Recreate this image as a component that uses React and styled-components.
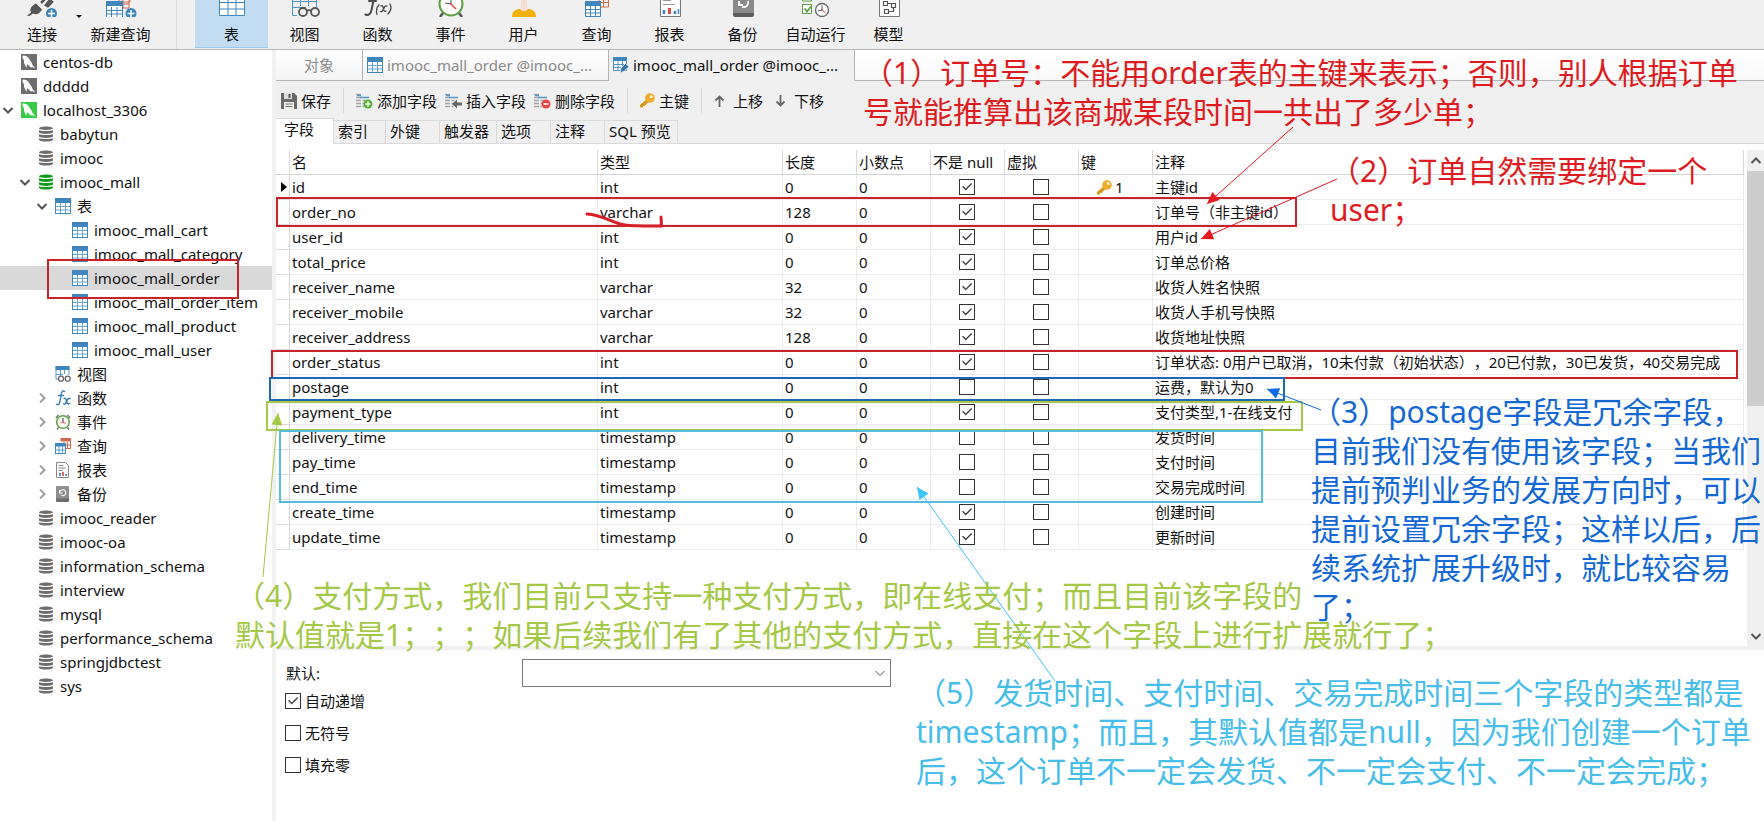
import React from "react";
import styled, { createGlobalStyle, css } from "styled-components";

const GlobalStyle = createGlobalStyle`
  * {
    box-sizing: border-box;
  }
  body {
    margin: 0;
    background: #fff;
    color: #111;
    font-family: "Noto Sans", "Noto Sans CJK SC", sans-serif;
    font-size: 15px;
    line-height: 20px;
    text-spacing-trim: space-all;
  }
  button, input, select {
    margin: 0;
    font: inherit;
    color: inherit;
  }
`;

const AppContainer = styled.div`
  position: relative;
  display: flex;
  flex-direction: column;
  min-height: 100vh;
  overflow: hidden;
`;

/* main toolbar */

const MainBar = styled.header`
  display: flex;
  height: 50px;
  background: #f0f0f0;
  border-bottom: 1px solid #b4b4b4;
  overflow: hidden;
`;
const MainButton = styled.button`
  display: flex;
  flex-direction: column;
  align-items: center;
  width: ${(props) => props.$width || 73}px;
  height: 48px;
  padding: 0 0 0 ${(props) => props.$left || 0}px;
  border: 0;
  border-bottom: 1px solid ${(props) => (props.$active ? "#9ccbee" : "#f0f0f0")};
  background: ${(props) => (props.$active ? "#c2ddf2" : "none")};
  white-space: nowrap;
  svg {
    flex: none;
    margin-bottom: 7px;
  }
`;
const Caret = styled.span`
  align-self: flex-start;
  margin-top: 15px;
  border: 3px solid transparent;
  border-top-color: #111;
`;
const MainDivider = styled.span`
  width: 1px;
  margin: 0 18px 0 17px;
  background: #dcdcdc;
`;

/* layout */

const Body = styled.div`
  display: flex;
  flex: 1;
`;
const Sidebar = styled.nav`
  flex: none;
  width: 276px;
  border-right: 4px solid #f2f2f2;
`;
const Main = styled.main`
  display: flex;
  flex: 1;
  flex-direction: column;
  min-width: 0;
`;

/* tree */

const TreeList = styled.ul`
  margin: 0;
  padding: 0;
  list-style: none;
`;
const TreeRow = styled.li`
  display: flex;
  align-items: center;
  height: 24px;
  padding-left: ${(props) => props.$level * 17}px;
  background: ${(props) => (props.$selected ? "#d9d9d9" : "none")};
  white-space: nowrap;
`;
const Expander = styled.span`
  display: flex;
  justify-content: center;
  width: 16px;
  margin-right: 5px;
`;
const TreeIcon = styled.span`
  display: flex;
  width: 16px;
  margin-right: 6px;
`;

/* document tabs */

const DocTabs = styled.div`
  display: flex;
  height: 31px;
`;
const DocTab = styled.button`
  display: flex;
  align-items: center;
  justify-content: ${(props) => (props.$center ? "center" : "flex-start")};
  gap: 4px;
  width: ${(props) => props.$width}px;
  padding: 0 4px;
  border: 0;
  border-right: 1px solid #b4b4b4;
  border-bottom: 1px solid #b4b4b4;
  background: linear-gradient(#fff, #f4f4f4);
  color: #8a8a8a;
  white-space: nowrap;
  ${(props) =>
    props.$active &&
    css`
      border-bottom-color: #f0f0f0;
      background: #f0f0f0;
      color: #111;
    `}
`;
const DocTabsRest = styled.div`
  flex: 1;
  border-bottom: 1px solid #b4b4b4;
  background: linear-gradient(#fff, #f9f9f9);
`;

/* editor toolbar */

const Tools = styled.div`
  display: flex;
  align-items: center;
  height: 37px;
  padding: 2px 0 0 5px;
  background: #f0f0f0;
`;
const ToolButton = styled.button`
  display: flex;
  align-items: center;
  gap: ${(props) => props.$gap || 4}px;
  padding: 0;
  margin-right: ${(props) => (props.$last ? 12 : 8)}px;
  border: 0;
  background: none;
  white-space: nowrap;
`;
const ToolDivider = styled.span`
  width: 1px;
  height: 25px;
  margin-right: 12px;
  background: #d8d8d8;
`;

const SubTabs = styled.div`
  display: flex;
  align-items: flex-end;
  height: 26px;
  background: #f0f0f0;
  box-shadow: inset 0 -1px #d6d6d6;
`;
const SubTab = styled.button`
  width: ${(props) => props.$width}px;
  height: 24px;
  padding: 0 0 2px 4px;
  border: 1px solid #dadada;
  border-left: 0;
  background: none;
  text-align: left;
  white-space: nowrap;
  ${(props) =>
    props.$active &&
    css`
      height: 26px;
      padding: 0 0 4px 8px;
      border-bottom-color: #fff;
      background: #fff;
    `}
`;

/* fields table */

const GridPane = styled.section`
  display: flex;
  height: 502px;
  padding-top: 6px;
  background: #fff;
`;
const GridScroll = styled.div`
  flex: 1;
  min-width: 0;
  padding-right: 3px;
`;
const Table = styled.table`
  width: 100%;
  table-layout: fixed;
  border-collapse: separate;
  border-spacing: 0;
`;
const Col = styled.col`
  width: ${(props) => (props.$width ? `${props.$width}px` : "auto")};
`;
const Th = styled.th`
  height: 25px;
  padding: 0 0 0 2px;
  border-right: 1px solid #d9d9d9;
  border-bottom: 1px solid #d4d4d4;
  font-weight: 400;
  text-align: left;
  white-space: nowrap;
`;
const Td = styled.td`
  height: 25px;
  padding: 0 0 0 2px;
  border-right: 1px solid #ececec;
  border-bottom: 1px solid #ececec;
  white-space: nowrap;
`;
const MarkCell = styled(Td)`
  padding-left: 5px;
  border-color: #d9d9d9;
  svg {
    display: block;
  }
`;
const CheckCell = styled(Td)`
  padding: 0 0 0 28px;
`;
const KeyMark = styled.span`
  display: flex;
  align-items: center;
  gap: 3px;
  padding-left: 16px;
`;
const Check = styled.input.attrs({ type: "checkbox" })`
  display: block;
  flex: none;
  appearance: none;
  width: 16px;
  height: 16px;
  border: 1px solid #333;
  background: #fff;
  &:checked::after {
    content: "";
    display: block;
    width: 14px;
    height: 14px;
    background: #444;
    clip-path: polygon(15% 48%, 22% 41%, 41% 61%, 80% 21%, 87% 28%, 41% 75%);
  }
`;

const ScrollBar = styled.div`
  display: flex;
  flex-direction: column;
  align-items: center;
  width: 17px;
  background: #f0f0f0;
`;
const ScrollButton = styled.button`
  display: flex;
  align-items: center;
  justify-content: center;
  width: 17px;
  height: 21px;
  padding: 0;
  border: 0;
  background: none;
`;
const ScrollThumb = styled.div`
  width: 17px;
  height: 235px;
  margin-bottom: auto;
  background: #cdcdcd;
`;

/* field properties */

const Splitter = styled.div`
  height: 4px;
  background: #f0f0f0;
`;
const Properties = styled.form`
  display: grid;
  grid-template-columns: 236px 369px;
  align-items: center;
  padding: 9px 0 0 10px;
`;
const SelectBox = styled.div`
  display: grid;
  align-items: center;
  > * {
    grid-area: 1 / 1;
  }
  svg {
    justify-self: end;
    margin-right: 5px;
    pointer-events: none;
  }
`;
const Select = styled.select`
  width: 100%;
  height: 28px;
  padding: 0 24px 0 6px;
  border: 1px solid #7a7a7a;
  border-radius: 0;
  appearance: none;
  background: #fff;
`;
const Options = styled.div`
  display: flex;
  flex-direction: column;
  grid-column: 1 / -1;
  gap: 12px;
  padding-top: 4px;
`;
const Option = styled.label`
  display: flex;
  align-items: center;
  gap: 4px;
  margin-left: -1px;
`;

/* notes over the window */

const Notes = styled.div`
  position: absolute;
  inset: 0;
  overflow: hidden;
  pointer-events: none;
`;
const Arrows = styled.svg`
  position: absolute;
  top: 0;
  left: 0;
`;
const Frame = styled.div`
  position: absolute;
  left: ${(props) => props.$x}px;
  top: ${(props) => props.$y}px;
  width: ${(props) => props.$w}px;
  height: ${(props) => props.$h}px;
  border: 2px solid ${(props) => props.$color};
`;
const Note = styled.p`
  position: absolute;
  left: ${(props) => props.$x}px;
  top: ${(props) => props.$y}px;
  margin: 0;
  color: ${(props) => props.$color};
  font-size: 30px;
  line-height: 39px;
  white-space: pre;
`;

/* icons */

const TableIcon = () => (
  <svg width="16" height="16" viewBox="0 0 16 16">
    <rect x="0.5" y="0.5" width="15" height="15" fill="#fff" stroke="#3f86bd" />
    <rect width="16" height="5" fill="#3f86bd" />
    <path d="M5.5 5v10M10.5 5v10M1 8.5h14M1 12h14" stroke="#6aa5d2" fill="none" />
  </svg>
);

const ViewIcon = () => (
  <svg width="16" height="16" viewBox="0 0 16 16">
    <path d="M1 1h13v8M1 1v12h3M1 8.5h7M5.5 4v6M9.5 4v4" stroke="#5b9bcb" fill="none" />
    <rect x="0.5" width="14" height="4" fill="#3f86bd" />
    <g fill="#fff" stroke="#666" strokeWidth="1.3">
      <circle cx="6" cy="12.7" r="2.5" />
      <circle cx="12.7" cy="12.7" r="2.5" />
    </g>
  </svg>
);

const FxIcon = () => (
  <svg width="16" height="16" viewBox="0 0 16 16" fill="none" stroke="#3b7db5" strokeLinecap="round">
    <path d="M9.5 1.5C7.5 0 6.6 2 6.1 5L4.8 12c-.5 2.6-1.8 3.3-3.3 2.2M3.5 5.5h5" strokeWidth="1.4" />
    <path d="M9 8.5c1.5-1 2 .5 2.5 2.5s1 4 3 2.5M15 8.5c-2-.8-3 2-3.5 3s-1.5 3.5-3 2.5" strokeWidth="1.5" />
  </svg>
);

const ClockIcon = () => (
  <svg width="16" height="16" viewBox="0 0 16 16" fill="none">
    <path d="M1 4l2.5-3M15 4l-2.5-3M3.5 13.5L2 15.5M12.5 13.5l1.5 2" stroke="#777" strokeWidth="1.6" />
    <circle cx="8" cy="8" r="6.3" fill="#fff" stroke="#62a34c" strokeWidth="1.6" />
    <path d="M8 4v4.5" stroke="#333" />
    <path d="M8 8.5l3 .8M8 8.5L5.5 9" stroke="#d55" />
  </svg>
);

const QueryIcon = () => (
  <svg width="16" height="16" viewBox="0 0 16 16">
    <path d="M6 .5h9.5v10H11M9 4v3M12.5 4v6M11 7h5" stroke="#d0694b" fill="none" />
    <rect x="5.5" width="10.5" height="3.5" fill="#d0694b" />
    <rect x="0.5" y="5.5" width="10" height="10" fill="#fff" stroke="#3f86bd" />
    <rect y="5" width="11" height="3.5" fill="#3f86bd" />
    <path d="M4 8v8M7.5 8v8M0 12h11" stroke="#5b9bcb" />
  </svg>
);

const ReportIcon = () => (
  <svg width="16" height="16" viewBox="0 0 16 16">
    <path d="M1.5.5h9l3 3v12h-12z" fill="#fff" stroke="#888" />
    <path d="M3.5 3.5h5M3.5 6h7M3.5 8.5h4" stroke="#888" />
    <path d="M5 11v3M11 12v2" stroke="#3f86bd" strokeWidth="1.8" />
    <path d="M8 10v4" stroke="#d65b4d" strokeWidth="1.8" />
  </svg>
);

const BackupIcon = () => (
  <svg width="16" height="16" viewBox="0 0 16 16">
    <rect x="1" width="13" height="16" rx="1.5" fill="#6b6b6b" />
    <rect x="1" width="13" height="12.5" rx="1.5" fill="#8f8f8f" />
    <path d="M4.5 4v3h3M4.8 6.5a3 3 0 1 1 1.5 2.8" stroke="#fff" strokeWidth="1.1" fill="none" />
  </svg>
);

const ServerIcon = ({ on }) => (
  <svg width="16" height="16" viewBox="0 0 16 16">
    <rect width="16" height="16" fill={on ? "#39cb48" : "#6d6d6d"} />
    <path
      d="M2 1.5C5 1.5 7.5 3 8.5 5.5c1 2 2.5 3 3 5.5l3 3.5-3.5-1.5-1 .5-1.5-1c-.5-1-1-2-2.5-2l-.5 3.500-1.5-3C2.500 9 3.500 7 2.500 5.500 1.500 4 1 2.500 2 1.500z"
      fill="#fff"
    />
  </svg>
);

const DbIcon = ({ on }) => (
  <svg width="16" height="16" viewBox="0 0 16 16">
    <path d="M1 2.5C1-.3 15-.3 15 2.5V13.5C15 16.3 1 16.3 1 13.5z" fill={on ? "#139c1c" : "#6d6d6d"} />
    <path d="M.5 3c2 2 13 2 15 0M.5 7c2 2 13 2 15 0M.5 11c2 2 13 2 15 0" fill="none" stroke="#fff" strokeWidth="1.1" />
  </svg>
);

const chevrons = {
  down: "M1.5 4l4.5 4.5L10.5 4",
  up: "M1.5 8L6 3.5 10.5 8",
  right: "M4 1.5L8.5 6 4 10.5",
};
const Chevron = ({ dir, color = "#555", width = 2 }) => (
  <svg width="12" height="12" viewBox="0 0 12 12" fill="none">
    <path d={chevrons[dir]} stroke={color} strokeWidth={width} />
  </svg>
);

const Plus = ({ cx, cy, r, color }) => (
  <g>
    <circle cx={cx} cy={cy} r={r} fill={color} />
    <path d={`M${cx - r + 2} ${cy}h${2 * r - 4}M${cx} ${cy - r + 2}v${2 * r - 4}`} stroke="#fff" strokeWidth="1.5" />
  </g>
);

// only the lower part of each big icon shows
const BigIcon = ({ children }) => (
  <svg width="32" height="17" viewBox="0 0 32 17" fill="none">
    {children}
  </svg>
);

const ConnectBig = () => (
  <BigIcon>
    <path d="M1 15.5l4-3c-2-4 1-7 5-9l6 6c-2 4-6 6-9 4l-3.5 2.5z" fill="#555" />
    <path d="M15 3l4-4M19 6l5-6 2 2-5 5" stroke="#555" strokeWidth="2.5" />
    <Plus cx={25.5} cy={13.5} r={5.5} color="#3f86bd" />
  </BigIcon>
);
const NewQueryBig = () => (
  <BigIcon>
    <path d="M14 0v2h11V0M18 0v8h6V0M18 4h6" stroke="#d0694b" />
    <path d="M1.5 2.5h16v15h-16zM6.5 7v10M12 7v10M2 10.5h15M2 14h15" fill="#fff" stroke="#3f86bd" />
    <path d="M1 1h17v5H1z" fill="#3f86bd" />
    <Plus cx={26} cy={13.5} r={5.5} color="#3f86bd" />
  </BigIcon>
);
const TableBig = () => (
  <BigIcon>
    <path d="M3.5-2h25v17.5h-25zM12-2v17M20-2v17M3 2.5h25M3 9h25" fill="#fff" stroke="#3f86bd" />
  </BigIcon>
);
const ViewBig = () => (
  <BigIcon>
    <path d="M3.5 0v15.5H8M11.5 0v6M19.5 0v6M27.5 0v7M3 1.5h25M3 7.5h14" stroke="#4f93c7" />
    <g fill="#f0f0f0" stroke="#555" strokeWidth="1.8">
      <circle cx="14" cy="12" r="4" />
      <circle cx="26" cy="12" r="4" />
      <path d="M18 11c1-1 3-1 4 0" />
    </g>
  </BigIcon>
);
const FunctionBig = () => (
  <BigIcon>
    <g stroke="#4a4a4a" strokeLinecap="round">
      <path d="M12-2L9.5 10c-.8 4-3 6-6 4.5M7 1h7" strokeWidth="2" />
      <path d="M17 5c-2.5 2.5-3 6-2 9.5M28 4c1.5 3 1 7-2 10" strokeWidth="1.3" />
      <path d="M19 6c2-1 2 1 2.5 3s1 3 2.5 2M25 6c-2-1-3 2-4 4s-1.5 2-2.5 1.5" strokeWidth="1.3" />
    </g>
  </BigIcon>
);
const ClockBig = () => (
  <BigIcon>
    <path d="M8 13l-3 4M24 13l3 4" stroke="#555" strokeWidth="2.5" />
    <circle cx="16" cy="4" r="11.5" fill="#fff" stroke="#5da044" strokeWidth="2" />
    <path d="M16 4V-3M16 4l-6-1" stroke="#555" />
    <path d="M15 3l6 6" stroke="#e04040" strokeWidth="1.4" />
  </BigIcon>
);
const UserBig = () => (
  <BigIcon>
    <path d="M4 17c0-6 4-8 8-8h8c4 0 8 2 8 8z" fill="#f1b00a" />
    <path d="M12 9c1-1 1-4 1-9h6c0 5 0 8 1 9-2 3-6 3-8 0z" fill="#f5dfd3" />
  </BigIcon>
);
const QueryBig = () => (
  <BigIcon>
    <path d="M18 0v7h9.5V0M22.5 0v7M18 2.5h10" stroke="#d0694b" />
    <path d="M4.5 2.5h15v14h-15zM9.5 6v10M14.5 6v10M5 9.5h14M5 13h14" fill="#fff" stroke="#3f86bd" />
    <path d="M4 1h16v5H4z" fill="#3f86bd" />
  </BigIcon>
);
const ReportBig = () => (
  <BigIcon>
    <path d="M6.5-3h20v19.5h-20z" fill="#fff" stroke="#777" />
    <path d="M9 .5h8M9 4.5h12" stroke="#999" />
    <path d="M10 10v4M21 11v3" stroke="#3f86bd" strokeWidth="2.5" />
    <path d="M15.5 8v6" stroke="#e04a3f" strokeWidth="3" />
    <path d="M24.5 9v5" stroke="#3f86bd" strokeWidth="1.5" />
  </BigIcon>
);
const BackupBig = () => (
  <BigIcon>
    <path d="M6-2h21v17a2 2 0 0 1-2 2H8a2 2 0 0 1-2-2z" fill="#5c5c5c" />
    <path d="M6-2h21v15H6z" fill="#8a8a8a" />
    <path d="M12 1v4h4M21 1c1 4-2 7-6 6" stroke="#fff" strokeWidth="1.8" />
  </BigIcon>
);
const AutoBig = () => (
  <BigIcon>
    <path d="M2.5-4h9v5h-9zM2.5 4.5h9v9h-9z" fill="#fff" stroke="#5da044" />
    <path d="M4.5 8.5l2.5 3 4-5" stroke="#5da044" strokeWidth="1.8" />
    <circle cx="22" cy="10" r="6.5" fill="#fff" stroke="#666" strokeWidth="1.3" />
    <path d="M22 10V5.5M22 10l-4 1" stroke="#555" />
    <path d="M21.5 9.5l4 3.5" stroke="#e04040" />
  </BigIcon>
);
const ModelBig = () => (
  <BigIcon>
    <path d="M6.5-3h20v19.5h-20z" fill="#fff" stroke="#777" />
    <path d="M10.5 1.5h4v4h-4zM18.5 3.5h4v4h-4zM11.5 9.5h4v4h-4zM14.5 3.5h4M20.5 7.5v4h-5" stroke="#555" strokeWidth="1.2" />
  </BigIcon>
);

const SaveIcon = () => (
  <svg width="16" height="16" viewBox="0 0 16 16">
    <path d="M0 0h13l3 3v13H0z" fill="#6a6a6a" />
    <path d="M3 0h8v6H3z" fill="#ddd" />
    <path d="M7.5 1h2v4h-2z" fill="#555" />
    <path d="M3 9h10v7H3z" fill="#eee" />
    <path d="M4.5 11h7M4.5 13.5h7" stroke="#777" />
  </svg>
);
const RowLines = () => (
  <g strokeWidth="1.6">
    <path d="M0 1.5h5M0 4.5h5M0 7.5h5M0 10.5h5M0 13.5h5M6.5 7.5h3M6.5 10.5h2M6.5 13.5h2" stroke="#a4a4a4" />
    <path d="M4 4.5h9M1 2.5h4" stroke="#4e97cf" />
  </g>
);
const AddFieldIcon = () => (
  <svg width="17" height="16" viewBox="0 0 17 16">
    <RowLines />
    <Plus cx={12} cy={11} r={4.5} color="#56b233" />
  </svg>
);
const InsertFieldIcon = () => (
  <svg width="17" height="16" viewBox="0 0 17 16">
    <RowLines />
    <path d="M7 11l5-4.5v3h5v3h-5v3z" fill="#666" />
  </svg>
);
const RemoveFieldIcon = () => (
  <svg width="17" height="16" viewBox="0 0 17 16">
    <RowLines />
    <circle cx="12" cy="11" r="4.5" fill="#ee4444" />
    <path d="M9.5 11h5" stroke="#fff" strokeWidth="1.6" />
  </svg>
);
const KeyIcon = () => (
  <svg width="15" height="15" viewBox="0 0 15 15">
    <path d="M7 6l2 2.5L4.5 13H3v1.5H0V12z" fill="#d99a1c" />
    <circle cx="10" cy="5" r="4.8" fill="#eeae2c" />
    <circle cx="11.3" cy="3.7" r="1.4" fill="#fff" />
  </svg>
);
const ArrowIcon = ({ down }) => (
  <svg width="11" height="12" viewBox="0 0 11 12" fill="none">
    <path
      d={down ? "M5.5 0v10M1.5 6.5l4 4 4-4" : "M5.5 12V2M1.5 5.5l4-4 4 4"}
      stroke="#666"
      strokeWidth="1.8"
    />
  </svg>
);
const EditTableIcon = () => (
  <svg width="16" height="16" viewBox="0 0 16 16">
    <path d="M.5.5h13v13H.5zM5 4v9M9.5 4v9M1 7.5h12M1 10.500h12" stroke="#4f93c7" fill="#fff" />
    <path d="M0 0h14v4H0z" fill="#3f86bd" />
    <path d="M7 16l1-5 4.5-4.5L16 9.5 11.500 14z" fill="#3577ad" stroke="#f0f0f0" strokeWidth="0.8" />
  </svg>
);

const mainButtons = [
  ["表", TableBig],
  ["视图", ViewBig],
  ["函数", FunctionBig],
  ["事件", ClockBig],
  ["用户", UserBig],
  ["查询", QueryBig],
  ["报表", ReportBig],
  ["备份", BackupBig],
  ["自动运行", AutoBig],
  ["模型", ModelBig],
];

const tree = [
  { label: "centos-db", level: 0, icon: <ServerIcon /> },
  { label: "ddddd", level: 0, icon: <ServerIcon /> },
  { label: "localhost_3306", level: 0, icon: <ServerIcon on />, open: true },
  { label: "babytun", level: 1, icon: <DbIcon /> },
  { label: "imooc", level: 1, icon: <DbIcon /> },
  { label: "imooc_mall", level: 1, icon: <DbIcon on />, open: true },
  { label: "表", level: 2, icon: <TableIcon />, open: true },
  { label: "imooc_mall_cart", level: 3, icon: <TableIcon /> },
  { label: "imooc_mall_category", level: 3, icon: <TableIcon /> },
  { label: "imooc_mall_order", level: 3, icon: <TableIcon />, selected: true },
  { label: "imooc_mall_order_item", level: 3, icon: <TableIcon /> },
  { label: "imooc_mall_product", level: 3, icon: <TableIcon /> },
  { label: "imooc_mall_user", level: 3, icon: <TableIcon /> },
  { label: "视图", level: 2, icon: <ViewIcon /> },
  { label: "函数", level: 2, icon: <FxIcon />, open: false },
  { label: "事件", level: 2, icon: <ClockIcon />, open: false },
  { label: "查询", level: 2, icon: <QueryIcon />, open: false },
  { label: "报表", level: 2, icon: <ReportIcon />, open: false },
  { label: "备份", level: 2, icon: <BackupIcon />, open: false },
  { label: "imooc_reader", level: 1, icon: <DbIcon /> },
  { label: "imooc-oa", level: 1, icon: <DbIcon /> },
  { label: "information_schema", level: 1, icon: <DbIcon /> },
  { label: "interview", level: 1, icon: <DbIcon /> },
  { label: "mysql", level: 1, icon: <DbIcon /> },
  { label: "performance_schema", level: 1, icon: <DbIcon /> },
  { label: "springjdbctest", level: 1, icon: <DbIcon /> },
  { label: "sys", level: 1, icon: <DbIcon /> },
];

const subTabs = [
  ["字段", 58],
  ["索引", 52],
  ["外键", 54],
  ["触发器", 57],
  ["选项", 54],
  ["注释", 54],
  ["SQL 预览", 73],
];

const columns = [
  ["", 14],
  ["名", 308],
  ["类型", 185],
  ["长度", 74],
  ["小数点", 74],
  ["不是 null", 74],
  ["虚拟", 74],
  ["键", 74],
  ["注释", 0],
];

// name, type, length, not null, comment
const fields = [
  ["id", "int", 0, true, "主键id"],
  ["order_no", "varchar", 128, true, "订单号（非主键id）"],
  ["user_id", "int", 0, true, "用户id"],
  ["total_price", "int", 0, true, "订单总价格"],
  ["receiver_name", "varchar", 32, true, "收货人姓名快照"],
  ["receiver_mobile", "varchar", 32, true, "收货人手机号快照"],
  ["receiver_address", "varchar", 128, true, "收货地址快照"],
  ["order_status", "int", 0, true, "订单状态: 0用户已取消，10未付款（初始状态），20已付款，30已发货，40交易完成"],
  ["postage", "int", 0, false, "运费，默认为0"],
  ["payment_type", "int", 0, true, "支付类型,1-在线支付"],
  ["delivery_time", "timestamp", 0, false, "发货时间"],
  ["pay_time", "timestamp", 0, false, "支付时间"],
  ["end_time", "timestamp", 0, false, "交易完成时间"],
  ["create_time", "timestamp", 0, true, "创建时间"],
  ["update_time", "timestamp", 0, true, "更新时间"],
];

const red = "#c9222a";
const noteRed = "#df1b22";
const blue = "#1468d3";
const green = "#a5c847";
const cyan = "#47bdea";

// x, y, width, height
const frames = [
  [47, 259, 192, 40, red],
  [276, 197, 1021, 30, red],
  [271, 350, 1467, 29, red],
  [269, 377, 1016, 24, "#1f68b5"],
  [266, 401, 1037, 30, green],
  [279, 430, 984, 73, "#55bbdf"],
];

// from x, y to x, y
const arrows = [
  [1293, 127, 1207, 204, "#e5191f"],
  [1337, 179, 1201, 239, "#e5191f"],
  [1321, 410, 1267, 389, "#0f6be8"],
  [263, 577, 278, 413, green],
  [1055, 681, 917, 487, "#3fc4fa"],
];

const notes = [
  [863, 53, noteRed, "（1）订单号：不能用order表的主键来表示；否则，别人根据订单\n号就能推算出该商城某段时间一共出了多少单；"],
  [1330, 151, noteRed, "（2）订单自然需要绑定一个\nuser；"],
  [1311, 392, blue, "（3）postage字段是冗余字段，\n目前我们没有使用该字段；当我们\n提前预判业务的发展方向时，可以\n提前设置冗余字段；这样以后，后\n续系统扩展升级时，就比较容易\n了；"],
  [235, 576, green, "（4）支付方式，我们目前只支持一种支付方式，即在线支付；而且目前该字段的\n默认值就是1；；；如果后续我们有了其他的支付方式，直接在这个字段上进行扩展就行了；"],
  [916, 673, cyan, "（5）发货时间、支付时间、交易完成时间三个字段的类型都是\ntimestamp；而且，其默认值都是null，因为我们创建一个订单\n后，这个订单不一定会发货、不一定会支付、不一定会完成；"],
];

function Arrow({ x1, y1, x2, y2, color }) {
  const angle = (Math.atan2(y2 - y1, x2 - x1) * 180) / Math.PI;
  return (
    <g>
      <path d={`M${x1} ${y1}L${x2} ${y2}`} stroke={color} />
      <path d="M0 0L-12-5.5V5.5z" fill={color} transform={`translate(${x2} ${y2}) rotate(${angle})`} />
    </g>
  );
}

function MainToolbar() {
  return (
    <MainBar>
      <MainButton $width={76} $left={8}>
        <ConnectBig />
        连接
      </MainButton>
      <Caret />
      <MainButton $width={77}>
        <NewQueryBig />
        新建查询
      </MainButton>
      <MainDivider />
      {mainButtons.map(([label, Icon], i) => (
        <MainButton key={label} $active={i === 0}>
          <Icon />
          {label}
        </MainButton>
      ))}
    </MainBar>
  );
}

function Tree() {
  return (
    <TreeList>
      {tree.map((node) => (
        <TreeRow key={node.label} $level={node.level} $selected={node.selected}>
          <Expander>
            {node.open === true && <Chevron dir="down" />}
            {node.open === false && <Chevron dir="right" color="#a0a0a0" />}
          </Expander>
          <TreeIcon>{node.icon}</TreeIcon>
          {node.label}
        </TreeRow>
      ))}
    </TreeList>
  );
}

function FieldsTable() {
  return (
    <Table>
      <colgroup>
        {columns.map(([label, width]) => (
          <Col key={label} $width={width} />
        ))}
      </colgroup>
      <thead>
        <tr>
          {columns.map(([label]) => (
            <Th key={label}>{label}</Th>
          ))}
        </tr>
      </thead>
      <tbody>
        {fields.map(([name, type, length, notNull, comment], i) => (
          <tr key={name}>
            <MarkCell>
              {i === 0 && (
                <svg width="6" height="12" viewBox="0 0 6 12">
                  <path d="M0 1l6 5-6 5z" />
                </svg>
              )}
            </MarkCell>
            <Td>{name}</Td>
            <Td>{type}</Td>
            <Td>{length}</Td>
            <Td>0</Td>
            <CheckCell>
              <Check defaultChecked={notNull} aria-label={`${name} 不是 null`} />
            </CheckCell>
            <CheckCell>
              <Check aria-label={`${name} 虚拟`} />
            </CheckCell>
            <Td>
              {i === 0 && (
                <KeyMark>
                  <KeyIcon />1
                </KeyMark>
              )}
            </Td>
            <Td>{comment}</Td>
          </tr>
        ))}
      </tbody>
    </Table>
  );
}

function App() {
  return (
    <AppContainer>
      <GlobalStyle />
      <MainToolbar />
      <Body>
        <Sidebar>
          <Tree />
        </Sidebar>
        <Main>
          <DocTabs>
            <DocTab $width={87} $center>
              对象
            </DocTab>
            <DocTab $width={246}>
              <TableIcon />
              imooc_mall_order @imooc_...
            </DocTab>
            <DocTab $width={246} $active>
              <EditTableIcon />
              imooc_mall_order @imooc_...
            </DocTab>
            <DocTabsRest />
          </DocTabs>
          <Tools>
            <ToolButton $last>
              <SaveIcon />
              保存
            </ToolButton>
            <ToolDivider />
            <ToolButton>
              <AddFieldIcon />
              添加字段
            </ToolButton>
            <ToolButton>
              <InsertFieldIcon />
              插入字段
            </ToolButton>
            <ToolButton $last>
              <RemoveFieldIcon />
              删除字段
            </ToolButton>
            <ToolDivider />
            <ToolButton $last>
              <KeyIcon />
              主键
            </ToolButton>
            <ToolDivider />
            <ToolButton $gap={8} $last>
              <ArrowIcon />
              上移
            </ToolButton>
            <ToolButton $gap={8}>
              <ArrowIcon down />
              下移
            </ToolButton>
          </Tools>
          <SubTabs>
            {subTabs.map(([label, width], i) => (
              <SubTab key={label} $width={width} $active={i === 0}>
                {label}
              </SubTab>
            ))}
          </SubTabs>
          <GridPane>
            <GridScroll>
              <FieldsTable />
            </GridScroll>
            <ScrollBar>
              <ScrollButton aria-label="向上">
                <Chevron dir="up" />
              </ScrollButton>
              <ScrollThumb />
              <ScrollButton aria-label="向下">
                <Chevron dir="down" />
              </ScrollButton>
            </ScrollBar>
          </GridPane>
          <Splitter />
          <Properties>
            <label htmlFor="default-value">默认:</label>
            <SelectBox>
              <Select id="default-value" />
              <Chevron dir="down" width={1} />
            </SelectBox>
            <Options>
              <Option>
                <Check defaultChecked />
                自动递增
              </Option>
              <Option>
                <Check />
                无符号
              </Option>
              <Option>
                <Check />
                填充零
              </Option>
            </Options>
          </Properties>
        </Main>
      </Body>
      <Notes>
        {frames.map(([x, y, w, h, color]) => (
          <Frame key={y} $x={x} $y={y} $w={w} $h={h} $color={color} />
        ))}
        <Arrows width="100%" height="100%" fill="none">
          {arrows.map(([x1, y1, x2, y2, color]) => (
            <Arrow key={x1} x1={x1} y1={y1} x2={x2} y2={y2} color={color} />
          ))}
          <path
            d="M587 214c14 1 20 6 33 10 10 3 15 1 23 2h18c1-3 0-6 0-9"
            stroke="#d81e26"
            strokeWidth="3"
            strokeLinecap="round"
          />
        </Arrows>
        {notes.map(([x, y, color, text]) => (
          <Note key={y} $x={x} $y={y} $color={color}>
            {text}
          </Note>
        ))}
      </Notes>
    </AppContainer>
  );
}

export default App;
